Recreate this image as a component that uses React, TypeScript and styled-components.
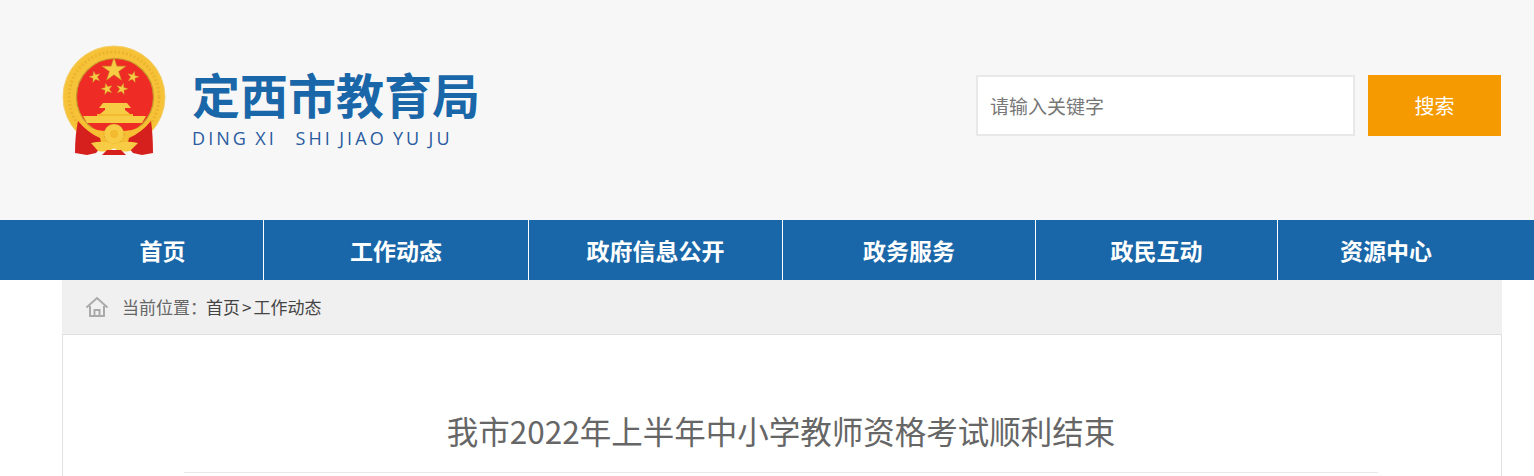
import React from "react";
import styled, { createGlobalStyle } from "styled-components";

const GlobalStyle = createGlobalStyle`
  html, body {
    margin: 0;
    padding: 0;
    height: 476px;
    overflow: hidden;
    background: #fff;
    font-family: "Noto Sans CJK SC", "Liberation Sans", sans-serif;
  }
`;

const Header = styled.header`
  height: 220px;
  background: #f7f7f7;
`;
const HeaderInner = styled.div`
  width: 1440px;
  height: 100%;
  margin: 0 32px 0 62px;
  display: flex;
  justify-content: space-between;
`;
const Brand = styled.div`
  display: flex;
  align-items: flex-start;
  padding-top: 44px;
`;
const EmblemSvg = styled.svg`
  margin-left: -2px;
`;
const BrandText = styled.div`
  margin-left: 22px;
  padding-top: 16px;
`;
const BrandName = styled.h1`
  margin: 0;
  font-size: 48px;
  line-height: 66px;
  height: 64px;
  font-weight: 700;
  color: #1967a8;
  white-space: nowrap;
`;
const BrandPinyin = styled.div`
  margin-top: 1px;
  font-family: "Open Sans", "Liberation Sans", sans-serif;
  font-size: 18px;
  line-height: 26px;
  letter-spacing: 3.07px;
  word-spacing: -1.5px;
  color: #2a5ba0;
  white-space: pre;
`;
const Search = styled.form`
  display: flex;
  align-items: flex-start;
  gap: 13px;
  padding: 75px 1px 0 0;
`;
const SearchInput = styled.input`
  box-sizing: border-box;
  width: 379px;
  height: 61px;
  padding: 0 12px;
  border: 2px solid #e8e8e8;
  background: #fff;
  font-family: inherit;
  font-size: 19px;
  outline: none;
  &::placeholder {
    color: #777;
    opacity: 1;
  }
`;
const SearchButton = styled.button`
  width: 133px;
  height: 61px;
  border: 0;
  padding: 0;
  background: #f59a00;
  color: #fff;
  font-family: inherit;
  font-size: 20px;
`;
const Nav = styled.nav`
  height: 60px;
  background: #1967a8;
`;
const NavList = styled.ul`
  list-style: none;
  margin: 0 0 0 62px;
  padding: 0;
  height: 100%;
  display: flex;
`;
const NavItem = styled.li<{ $w: number }>`
  box-sizing: border-box;
  width: ${(p) => p.$w}px;
  display: flex;
  align-items: center;
  justify-content: center;
  color: #fff;
  font-size: 23px;
  font-weight: 700;
  border-right: 1px solid #fff;
  &:last-child {
    border-right: 0;
  }
`;
const Main = styled.main`
  width: 1440px;
  margin-left: 62px;
`;
const Crumbs = styled.div`
  box-sizing: border-box;
  height: 55px;
  padding: 0 0 1px 23px;
  display: flex;
  align-items: center;
  background: #f0f0f0;
  border-bottom: 1px solid #e0e0e0;
  font-size: 17px;
  color: #666;
`;
const CrumbLabel = styled.span`
  margin-right: -1px;
`;
const CrumbLink = styled.span`
  color: #444;
`;
const CrumbSep = styled.span`
  color: #444;
  margin: 0 2px;
`;
const HomeIcon = styled.svg`
  width: 24px;
  height: 22px;
  margin-right: 13px;
`;
const Panel = styled.section`
  box-sizing: border-box;
  height: 141px;
  padding: 0 123px 0 121px;
  border: 1px solid #e0e0e0;
  border-width: 0 1px;
`;
const Title = styled.h2`
  margin: 0;
  padding-top: 71px;
  height: 66px;
  box-sizing: content-box;
  border-bottom: 1px solid #e8e8e8;
  font-size: 31.5px;
  line-height: 48px;
  font-weight: 400;
  color: #666;
  text-align: center;
`;

const navItems = [
  { label: "首页", w: 202 },
  { label: "工作动态", w: 265 },
  { label: "政府信息公开", w: 254 },
  { label: "政务服务", w: 253 },
  { label: "政民互动", w: 242 },
  { label: "资源中心", w: 216 },
];

const star = (cx: number, cy: number, r: number, rot = 0) => {
  const pts: string[] = [];
  for (let i = 0; i < 10; i++) {
    const rad = i % 2 === 0 ? r : r * 0.382;
    const a = ((-90 + rot + i * 36) * Math.PI) / 180;
    pts.push(`${(cx + rad * Math.cos(a)).toFixed(2)},${(cy + rad * Math.sin(a)).toFixed(2)}`);
  }
  return pts.join(" ");
};

const gold = "#f8cb45";
const goldDark = "#c8962a";
const red = "#ee2b24";
const drape = "#d6201d";

// coordinates are page pixels, so the viewBox starts where the emblem does
const Emblem = () => (
  <EmblemSvg width="110" height="112" viewBox="60 44 110 112">
    <circle cx="114" cy="97" r="51" fill="#f6c238" stroke="#f4cf6e" strokeWidth="1" />
    <circle cx="114" cy="97" r="45" fill="none" stroke="#ecb32e" strokeWidth="3" strokeDasharray="2 2" />
    <circle cx="115" cy="97" r="38.5" fill={red} stroke={goldDark} strokeWidth="1.2" />
    <polygon points={star(114, 70, 12.5)} fill={gold} stroke={goldDark} strokeWidth="0.6" />
    <polygon points={star(95, 77, 6, -15)} fill={gold} stroke={goldDark} strokeWidth="0.4" />
    <polygon points={star(133, 77, 6, 15)} fill={gold} stroke={goldDark} strokeWidth="0.4" />
    <polygon points={star(107, 89, 6, -15)} fill={gold} stroke={goldDark} strokeWidth="0.4" />
    <polygon points={star(122, 89, 6, 15)} fill={gold} stroke={goldDark} strokeWidth="0.4" />
    {/* gate tower */}
    <path d="M103 103 h24 l4 5 h-6 v2 l5 4 h-30 l5 -4 v-2 h-6 Z" fill={gold} />
    <path d="M97 114 h36 v2 h-36 Z" fill="#f3b92f" />
    <path d="M83 116 H146 L142 123 H87 Z" fill={gold} />
    {/* ring foot over the red field */}
    <path d="M78 119 Q92 131 104 131 H124 Q138 131 151 119 L150 128 Q136 140 122 141 H106 Q92 140 79 128 Z" fill="#f6bf33" />
    {/* drapes */}
    <path d="M78 121 Q88 133 100 138 L102 146 L96 153 L87 155 L75 153 Q75 135 78 121 Z" fill={drape} />
    <path d="M151 121 Q141 133 129 138 L127 146 L133 153 L142 155 L153 153 Q153 135 151 121 Z" fill={drape} />
    {/* gear wheel */}
    <circle cx="114" cy="134" r="10" fill={gold} stroke={goldDark} strokeWidth="0.6" strokeDasharray="2 1.4" />
    <circle cx="114" cy="134" r="4" fill="#f3b92f" />
    {/* ribbon */}
    <path d="M91 143 Q104 140 114 144 Q124 140 138 143 L130 151 Q120 153 114 148 Q108 153 98 151 Z" fill={gold} />
    <path d="M107 150 H121 L126 155 H102 Z" fill={drape} />
  </EmblemSvg>
);

export default function App() {
  return (
    <>
      <GlobalStyle />
      <Header>
        <HeaderInner>
          <Brand>
            <Emblem />
            <BrandText>
              <BrandName>定西市教育局</BrandName>
              <BrandPinyin>{"DING XI   SHI JIAO YU JU"}</BrandPinyin>
            </BrandText>
          </Brand>
          <Search onSubmit={(e) => e.preventDefault()}>
            <SearchInput placeholder="请输入关键字" />
            <SearchButton type="button">搜索</SearchButton>
          </Search>
        </HeaderInner>
      </Header>
      <Nav>
        <NavList>
          {navItems.map((item) => (
            <NavItem key={item.label} $w={item.w}>
              {item.label}
            </NavItem>
          ))}
        </NavList>
      </Nav>
      <Main>
        <Crumbs>
          <HomeIcon viewBox="0 0 24 22" fill="none" stroke="#aaa" strokeWidth="2">
            <path d="M1.5 11.5 L12 2 L22.5 11.5" />
            <path d="M5 10 V20 H19 V10" />
            <path d="M9.5 20 V14 H14.5 V20" />
          </HomeIcon>
          <CrumbLabel>当前位置：</CrumbLabel>
          <CrumbLink>首页</CrumbLink>
          <CrumbSep>&gt;</CrumbSep>
          <CrumbLink>工作动态</CrumbLink>
        </Crumbs>
        <Panel>
          <Title>我市2022年上半年中小学教师资格考试顺利结束</Title>
        </Panel>
      </Main>
    </>
  );
}
